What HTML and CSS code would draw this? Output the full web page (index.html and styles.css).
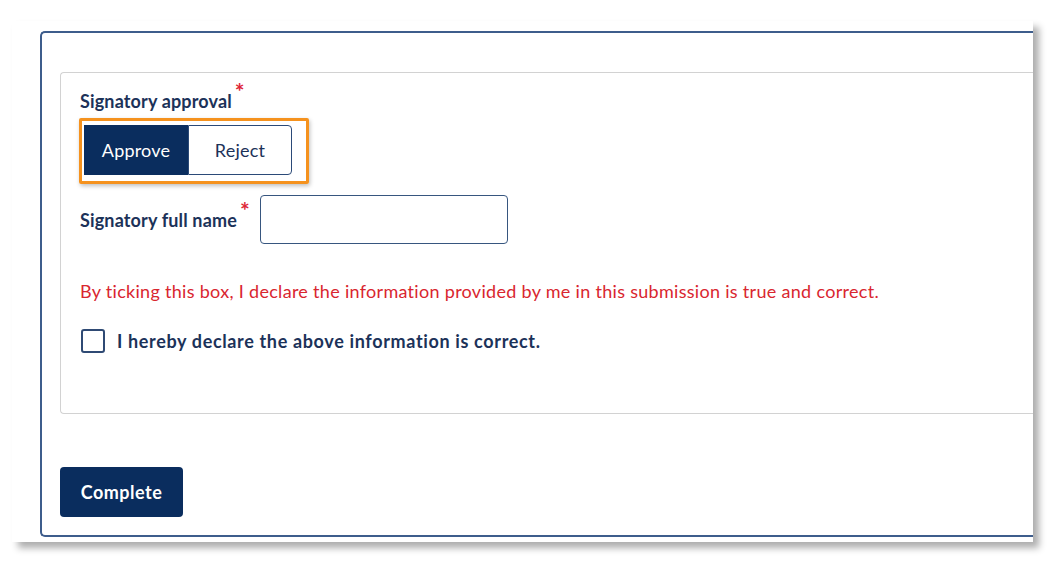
FILE: index.html
```html
<!DOCTYPE html>
<html lang="en">
<head>
<meta charset="utf-8">
<title>Signatory approval</title>
<link rel="stylesheet" href="styles.css">
</head>
<body>
<div class="shot">
  <div class="card">
    <div class="panel">
      <div class="label">Signatory approval<span class="req">*</span></div>
      <div class="highlight">
        <div class="toggle">
          <button class="opt opt-on" type="button">Approve</button>
          <button class="opt opt-off" type="button">Reject</button>
        </div>
      </div>
      <div class="name-row">
        <label class="label" for="fullname">Signatory full name<span class="req">*</span></label>
        <input class="text-input" id="fullname" type="text">
      </div>
      <p class="declare">By ticking this box, I declare the information provided by me in this submission is true and correct.</p>
      <label class="check-row">
        <span class="checkbox"></span>
        <span class="check-label">I hereby declare the above information is correct.</span>
      </label>
    </div>
    <button class="complete" type="button">Complete</button>
  </div>
</div>
</body>
</html>
```

FILE: styles.css
```css
* { box-sizing: border-box; }

html, body {
  margin: 0;
  padding: 0;
  background: #ffffff;
  font-family: "Lato", "Liberation Sans", sans-serif;
}

body {
  width: 1060px;
  height: 564px;
  overflow: hidden;
}

.shot {
  margin: 21px 0 0 12px;
  width: 1021px;
  height: 521px;
  background: #ffffff;
  padding: 10px 0 0 28px;
  box-shadow: 6px 6px 7px rgba(0, 0, 0, 0.32);
  overflow: hidden;
}

.card {
  height: 506px;
  border: 2px solid #3e5d8c;
  border-right: none;
  border-radius: 5px 0 0 5px;
  padding: 39px 0 0 18px;
}

.panel {
  height: 342px;
  border: 1px solid #d2d2d2;
  border-right: none;
  border-radius: 4px 0 0 4px;
  padding: 17px 0 0 19px;
}

.label {
  font-size: 18px;
  font-weight: 700;
  color: #1c3259;
  line-height: 22px;
  letter-spacing: 0.15px;
  white-space: nowrap;
}

.req {
  color: #de2638;
  font-weight: 700;
  position: relative;
  top: -8px;
  margin-left: 3px;
  font-size: 23px;
  line-height: 0;
}

.highlight {
  display: inline-block;
  margin: 6px 0 0 -1px;
  border: 3px solid #f5921e;
  border-radius: 2px;
  padding: 4px 14px 6px 2px;
  box-shadow: 1px 2px 4px rgba(0, 0, 0, 0.25);
}

.toggle {
  display: flex;
}

.opt {
  width: 104px;
  height: 50px;
  font-family: "Lato", "Liberation Sans", sans-serif;
  font-size: 18px;
  letter-spacing: 0.2px;
  padding: 0;
  margin: 0;
  cursor: pointer;
}

.opt-on {
  background: #0a2d5e;
  color: #ffffff;
  border: none;
}

.opt-off {
  background: #ffffff;
  color: #1c3259;
  border: 1.5px solid #2b4a78;
  border-radius: 0 4px 4px 0;
}

.name-row {
  display: flex;
  align-items: center;
  gap: 10px;
  margin-top: 11px;
}

.text-input {
  width: 248px;
  height: 49px;
  border: 1.5px solid #37567f;
  border-radius: 4px;
  background: #ffffff;
  font-family: "Lato", "Liberation Sans", sans-serif;
  font-size: 16px;
}

.declare {
  margin: 36px 0 0 0;
  font-size: 18px;
  line-height: 22px;
  letter-spacing: 0.3px;
  color: #d9262f;
  white-space: nowrap;
}

.check-row {
  display: flex;
  align-items: center;
  gap: 12px;
  margin-top: 27px;
  margin-left: 1px;
}

.checkbox {
  width: 24px;
  height: 24px;
  border: 2px solid #2f4a74;
  border-radius: 3px;
  background: #ffffff;
}

.check-label {
  font-size: 18px;
  font-weight: 700;
  color: #1c3259;
  letter-spacing: 0.65px;
  white-space: nowrap;
}

.complete {
  display: block;
  margin-top: 53px;
  width: 123px;
  height: 50px;
  background: #0a2d5e;
  color: #ffffff;
  border: none;
  border-radius: 4px;
  font-family: "Lato", "Liberation Sans", sans-serif;
  font-size: 18px;
  letter-spacing: 0.5px;
  font-weight: 700;
}
```
